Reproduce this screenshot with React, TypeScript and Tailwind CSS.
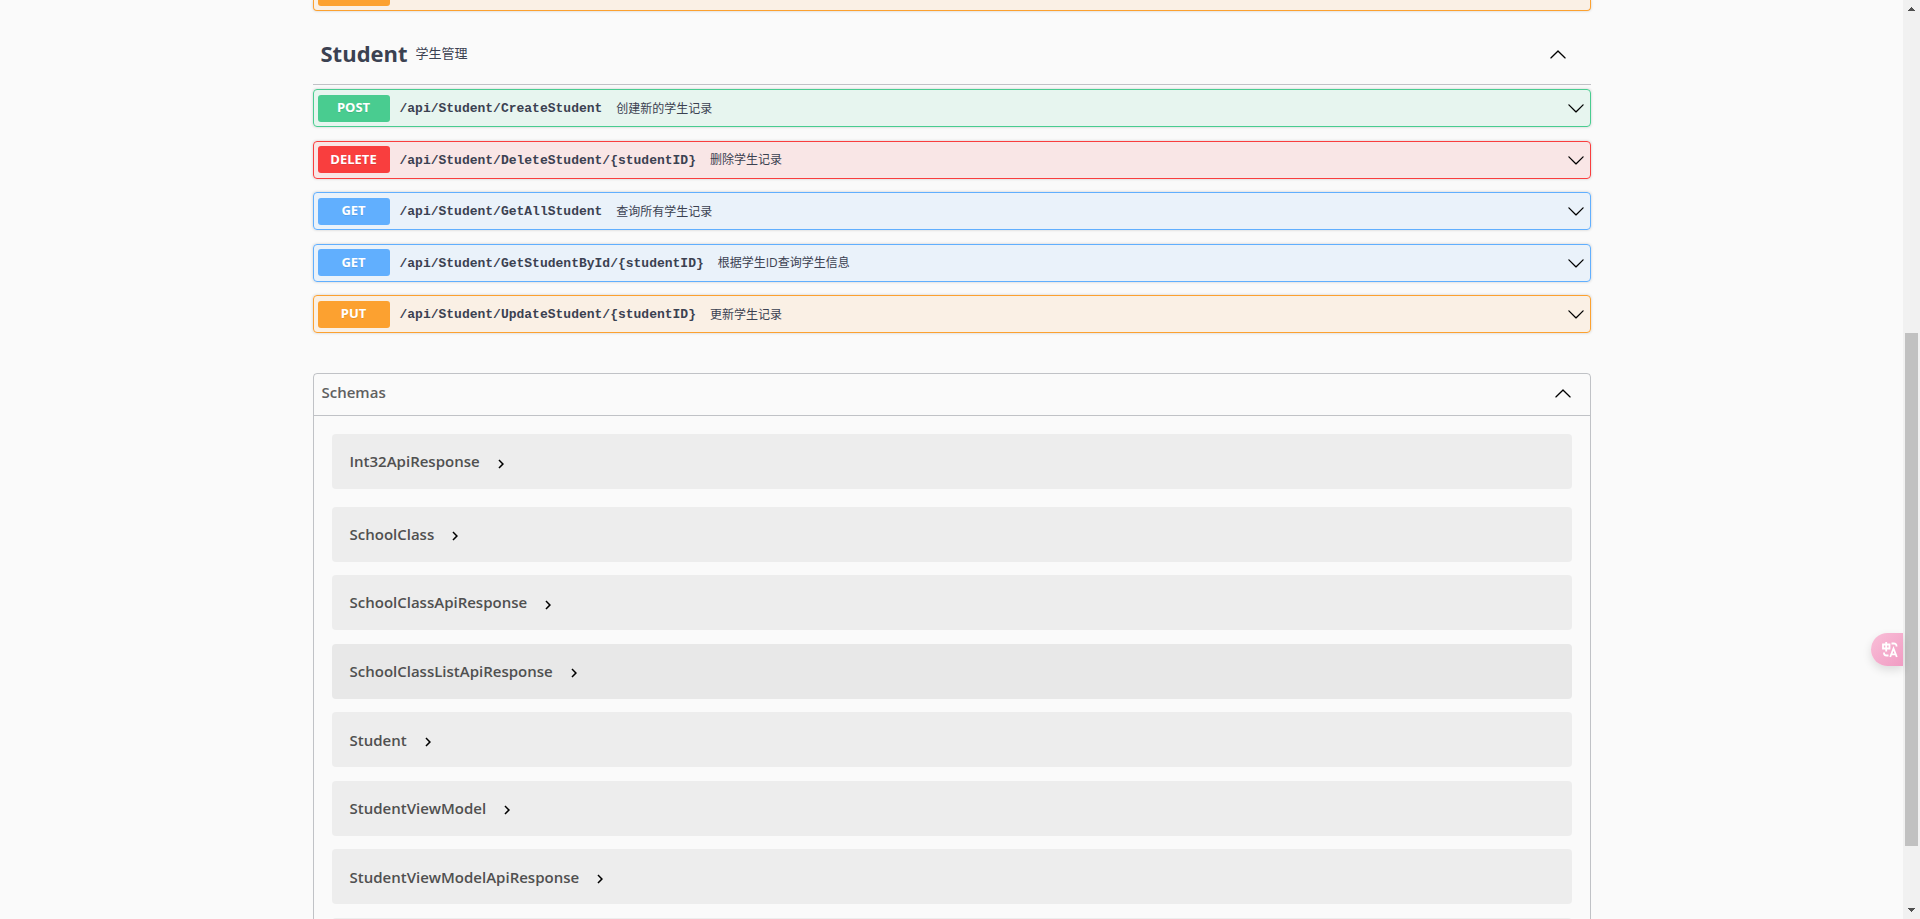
import { FC } from "react";

type Method = "POST" | "DELETE" | "GET" | "PUT";

const methodStyles: Record<Method, { block: string; badge: string }> = {
  POST: { block: "border-[#49cc90] bg-[#49cc90]/10", badge: "bg-[#49cc90]" },
  DELETE: { block: "border-[#f93e3e] bg-[#f93e3e]/10", badge: "bg-[#f93e3e]" },
  GET: { block: "border-[#61affe] bg-[#61affe]/10", badge: "bg-[#61affe]" },
  PUT: { block: "border-[#fca130] bg-[#fca130]/10", badge: "bg-[#fca130]" },
};

const operations: { method: Method; path: string; summary: string }[] = [
  { method: "POST", path: "/api/Student/CreateStudent", summary: "创建新的学生记录" },
  { method: "DELETE", path: "/api/Student/DeleteStudent/{studentID}", summary: "删除学生记录" },
  { method: "GET", path: "/api/Student/GetAllStudent", summary: "查询所有学生记录" },
  { method: "GET", path: "/api/Student/GetStudentById/{studentID}", summary: "根据学生ID查询学生信息" },
  { method: "PUT", path: "/api/Student/UpdateStudent/{studentID}", summary: "更新学生记录" },
];

const schemas = [
  "Int32ApiResponse",
  "SchoolClass",
  "SchoolClassApiResponse",
  "SchoolClassListApiResponse",
  "Student",
  "StudentViewModel",
  "StudentViewModelApiResponse",
];

const ArrowUp: FC = () => (
  <svg className="shrink-0" width="18" height="18" viewBox="0 0 20 20" aria-hidden="true">
    <path d="M17.418 14.908c.272.268.709.268.979 0s.271-.701 0-.969l-7.908-7.83c-.27-.268-.707-.268-.979 0l-7.908 7.83c-.27.268-.27.701 0 .969.271.268.709.268.979 0L10 7.767l7.418 7.141z" />
  </svg>
);

const ArrowDown: FC = () => (
  <svg className="shrink-0" width="18" height="18" viewBox="0 0 20 20" aria-hidden="true">
    <path d="M17.418 6.109c.272-.268.709-.268.979 0s.271.701 0 .969l-7.908 7.83c-.27.268-.707.268-.979 0l-7.908-7.83c-.27-.268-.27-.701 0-.969.271-.268.709-.268.979 0L10 13.25l7.418-7.141z" />
  </svg>
);

const Operation: FC<{ method: Method; path: string; summary: string }> = ({
  method,
  path,
  summary,
}) => (
  <button
    type="button"
    className={`flex h-[38px] w-full shrink-0 items-center rounded border pl-1 pr-[5px] text-left shadow-[0_0_3px_rgba(0,0,0,0.19)] ${methodStyles[method].block}`}
  >
    <span
      className={`flex h-[27px] w-[72px] items-center justify-center rounded-[3px] text-[13px] font-bold text-white text-shadow-[0_1px_0_rgb(0_0_0/0.1)] ${methodStyles[method].badge}`}
    >
      {method}
    </span>
    <span className="ml-[10px] pt-0.5 font-['Liberation_Mono',monospace] text-[13px] font-bold">
      {path}
    </span>
    <span className="ml-[14px] flex-1 pt-px text-xs">{summary}</span>
    <ArrowDown />
  </button>
);

const SchemaItem: FC<{ name: string }> = ({ name }) => (
  <li
    className={`flex h-[55px] shrink-0 items-center rounded px-[18px] first:mb-1 ${
      name === "SchoolClassListApiResponse" ? "bg-[#e8e8e8]" : "bg-[#ededed]"
    }`}
  >
    <button type="button" className="flex items-center gap-3 text-[15px] font-semibold text-[#505050]">
      {name}
      <svg className="mt-1" width="18" height="18" viewBox="0 0 24 24" fill="#000" aria-hidden="true">
        <path d="M10 6L8.59 7.41 13.17 12l-4.58 4.59L10 18l6-6z" />
      </svg>
    </button>
  </li>
);

const ScrollRail: FC = () => (
  <div className="flex w-[17px] shrink-0 flex-col items-center bg-[#f1f1f1]" aria-hidden="true">
    <svg width="17" height="17" viewBox="0 0 17 17" fill="#505050">
      <path d="M5 11h7v-1h-1V9h-1V8H9V7H8v1H7v1H6v1H5z" />
    </svg>
    <div className="flex w-full flex-1 flex-col items-center">
      <div className="grow-[316]" />
      <div className="w-[13px] grow-[513] bg-[#c1c1c1]" />
      <div className="grow-[56]" />
    </div>
    <svg width="17" height="17" viewBox="0 0 17 17" fill="#505050">
      <path d="M5 6h7v1h-1v1h-1v1H9v1H8V9H7V8H6V7H5z" />
    </svg>
  </div>
);

const TranslateButton: FC = () => (
  <button
    type="button"
    aria-label="Translate"
    className="absolute right-[17px] top-[633px] flex h-[33px] w-8 items-center rounded-l-full bg-linear-to-br from-[#f9bfd8] to-[#f09cc3] pl-[10px] shadow-[0_4px_10px_rgba(0,0,0,0.12)]"
  >
    <svg width="18" height="18" viewBox="0 0 18 18" fill="none" stroke="#fff" strokeWidth="1.8">
      <path d="M2 3.5h6.5v4H2zM5.2 1v9.500" />
      <path d="M10.5 2.5H13A2.500 2.500 0 0 1 15.500 5v.5" />
      <path d="M3 11.5v.5a2.500 2.500 0 0 0 2.500 2.500h2" />
      <path d="M9.200 16l3.300-8.600L15.800 16M10.400 13.400h4.200" />
    </svg>
  </button>
);

const App: FC = () => {
  return (
    <div className="relative flex h-screen overflow-hidden bg-[#fafafa] font-['Open_Sans','Noto_Sans_CJK_SC',sans-serif] text-[#3b4151]">
      <main className="min-w-0 flex-1 overflow-hidden">
        <div className="mx-auto max-w-[1314px] px-[18px]">
          {/* tail of the previous section, scrolled mostly out of view */}
          <div className="flex h-[11px] items-start rounded-b border border-t-0 border-[#fca130] bg-[#fca130]/10 pl-1 shadow-[0_0_3px_rgba(0,0,0,0.19)]">
            <span className="h-[6px] w-[72px] rounded-b-[3px] bg-[#fca130]" />
          </div>

          <section className="mt-[9px]">
            <button
              type="button"
              className="flex h-[65px] w-full items-center border-b border-[#3b4151]/30 pl-2 pr-6 pt-[3px] text-left"
            >
              <h2 className="text-[22px] font-bold">Student</h2>
              <span className="ml-2 flex-1 text-[13px]">学生管理</span>
              <ArrowUp />
            </button>
            <div className="mt-1 flex min-h-[244px] flex-col justify-between">
              {operations.map((op) => (
                <Operation key={op.path} {...op} />
              ))}
            </div>
          </section>

          <section className="mt-10 rounded border border-[#3b4151]/30">
            <button
              type="button"
              className="flex h-[42px] w-full items-center justify-between border-b border-[#3b4151]/30 pl-2 pr-[18px] pb-1 text-[15px] font-semibold text-[#606060]"
            >
              Schemas
              <ArrowUp />
            </button>
            <ul className="mx-[18px] my-[18px] flex min-h-[539px] flex-col justify-between">
              {schemas.map((name) => (
                <SchemaItem key={name} name={name} />
              ))}
              <li className="h-[55px] shrink-0 rounded bg-[#ededed]" />
            </ul>
          </section>
        </div>
      </main>
      <ScrollRail />
      <TranslateButton />
    </div>
  );
};

export default App;
